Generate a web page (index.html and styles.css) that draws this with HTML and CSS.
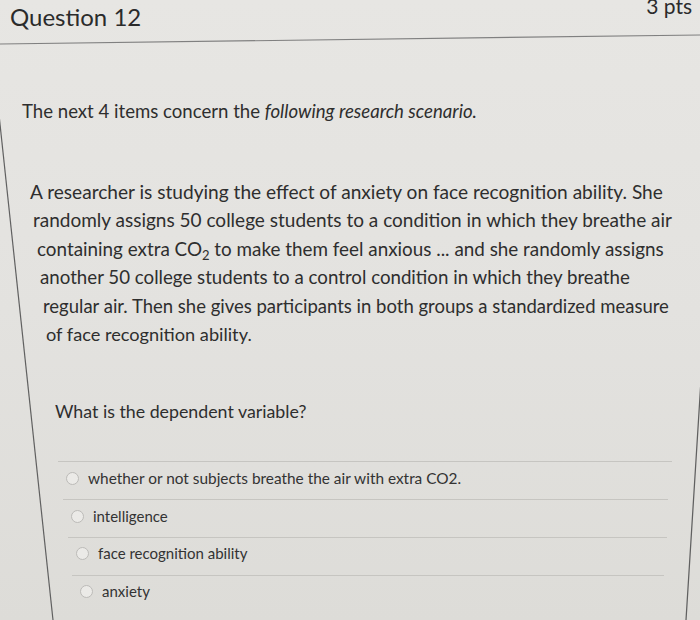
FILE: index.html
```html
<!DOCTYPE html>
<html lang="en">
<head>
<meta charset="utf-8">
<title>Question 12</title>
<link rel="stylesheet" href="styles.css">
</head>
<body>
<div class="question">
  <header class="q-header">
    <h2 class="q-title">Question 12</h2>
    <span class="q-pts">3 pts</span>
  </header>
  <div class="q-body">
    <p class="intro">The next 4 items concern the <em>following research scenario.</em></p>
    <p class="scenario">
      <span class="line l1">A researcher is studying the effect of anxiety on face recognition ability. She</span>
      <span class="line l2">randomly assigns 50 college students to a condition in which they breathe air</span>
      <span class="line l3">containing extra CO<sub>2</sub> to make them feel anxious ... and she randomly assigns</span>
      <span class="line l4">another 50 college students to a control condition in which they breathe</span>
      <span class="line l5">regular air. Then she gives participants in both groups a standardized measure</span>
      <span class="line l6">of face recognition ability.</span>
    </p>
    <p class="prompt">What is the dependent variable?</p>
    <ul class="answers">
      <li class="answer a1"><span class="radio"></span><span class="label">whether or not subjects breathe the air with extra CO2.</span></li>
      <li class="answer a2"><span class="radio"></span><span class="label">intelligence</span></li>
      <li class="answer a3"><span class="radio"></span><span class="label">face recognition ability</span></li>
      <li class="answer a4"><span class="radio"></span><span class="label">anxiety</span></li>
    </ul>
  </div>
</div>
</body>
</html>
```

FILE: styles.css
```css
html, body {
  margin: 0;
  padding: 0;
}

body {
  width: 700px;
  height: 620px;
  overflow: hidden;
  font-family: "Lato", "Open Sans", "Liberation Sans", sans-serif;
  color: #2e2e2e;
  background:
    url("data:image/svg+xml,%3Csvg xmlns='http://www.w3.org/2000/svg' width='700' height='620'%3E%3Cpath d='M0 44 L700 35' stroke='%23808080' stroke-width='1.2' fill='none'/%3E%3Cpath d='M-9 40 L53 620' stroke='%23606060' stroke-width='1.2' fill='none'/%3E%3Cpath d='M706 300 L686 620' stroke='%23606060' stroke-width='1.2' fill='none'/%3E%3C/svg%3E") no-repeat 0 0,
    linear-gradient(180deg, #e7e6e3 0%, #e3e2df 50%, #dddcd8 100%);
}

.question {
  width: 700px;
}

.q-header {
  height: 40px;
  display: flex;
  justify-content: space-between;
  align-items: flex-start;
  padding: 0 8px 0 10px;
  box-sizing: border-box;
}

.q-title {
  margin: 3px 0 0;
  font-size: 24px;
  line-height: 28px;
  font-weight: 400;
  color: #2b2b2b;
}

.q-pts {
  margin-top: -6px;
  font-size: 21px;
  line-height: 24px;
  color: #2b2b2b;
}

.q-body {
  display: flex;
  flex-direction: column;
}

.intro {
  margin: 59px 0 0 22px;
  font-size: 18.6px;
  line-height: 24px;
}

.intro em {
  font-style: italic;
}

.scenario {
  margin: 55px 0 0;
  line-height: 28.4px;
}

.line {
  display: block;
  white-space: nowrap;
}

.l1 { padding-left: 30px; font-size: 19.1px; }
.l2 { padding-left: 33px; font-size: 19px; }
.l3 { padding-left: 37px; font-size: 18.85px; }
.l4 { padding-left: 40px; font-size: 18.7px; }
.l5 { padding-left: 43px; font-size: 18.5px; }
.l6 { padding-left: 46px; font-size: 18.2px; }

.scenario sub {
  font-size: 13px;
  line-height: 0;
  vertical-align: -4px;
}

.prompt {
  margin: 51px 0 0 55px;
  font-size: 17.8px;
  line-height: 24px;
}

.answers {
  list-style: none;
  margin: 38px 0 0;
  padding: 0;
}

.answer {
  display: flex;
  align-items: center;
  gap: 9px;
  height: 38px;
  box-sizing: border-box;
  padding: 0 0 7px 8px;
  border-top: 1px solid #c6c5c1;
  font-size: 15px;
  line-height: 20px;
  color: #333333;
}

.a1 { margin: 0 28px 0 58px; font-size: 15.4px; padding-bottom: 5px; }
.a2 { margin: 0 32px 0 63px; padding-bottom: 5px; }
.a3 { margin: 0 33px 0 68px; }
.a4 { margin: 0 36px 0 72px; }

.radio {
  flex: none;
  width: 11px;
  height: 11px;
  border: 1.5px solid #bcbbb8;
  border-radius: 50%;
  background: #ebeae7;
}
```
